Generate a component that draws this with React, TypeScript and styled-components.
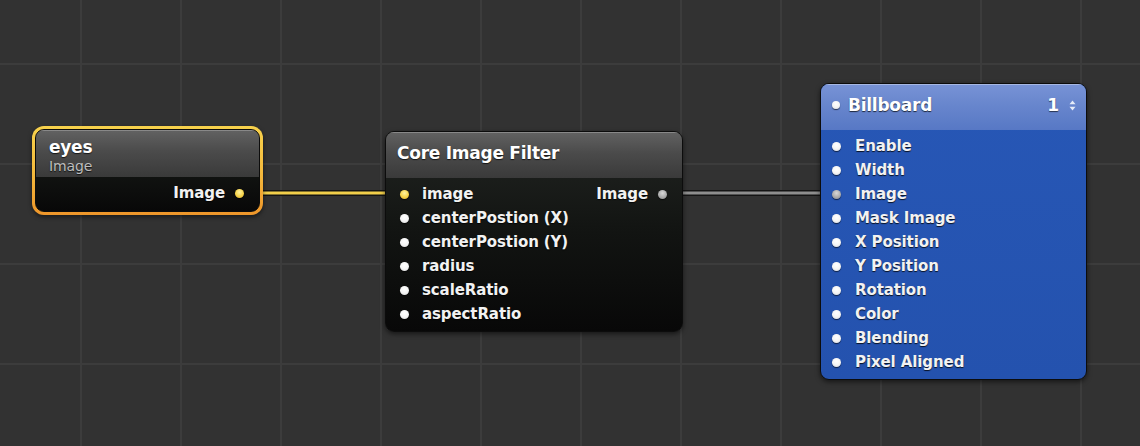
import React from "react";
import styled, { createGlobalStyle, css } from "styled-components";

const GlobalStyle = createGlobalStyle`
  html, body { margin: 0; padding: 0; background: #323232; }
  body { font-family: "DejaVu Sans", "Liberation Sans", sans-serif; }
`;

const Canvas = styled.div`
  position: relative;
  width: 1140px;
  height: 446px;
  overflow: hidden;
  background-color: #323232;
  background-image:
    linear-gradient(to right, #3c3c3c 0, #3c3c3c 2px, transparent 2px),
    linear-gradient(to bottom, #3c3c3c 0, #3c3c3c 2px, transparent 2px);
  background-size: 100px 100px;
  background-position: 80px 63px;
`;

const Wires = styled.svg`
  position: absolute;
  inset: 0;
  width: 1140px;
  height: 446px;
  z-index: 0;
`;

type Pos = { $x: number; $y: number; $w: number; $h: number };

const NodeFrame = styled.div<Pos & { $selected?: boolean }>`
  position: absolute;
  left: ${(p) => p.$x}px;
  top: ${(p) => p.$y}px;
  width: ${(p) => p.$w}px;
  height: ${(p) => p.$h}px;
  z-index: 1;
  box-sizing: border-box;
  border-radius: ${(p) => (p.$selected ? 12 : 9)}px;
  display: flex;
  ${(p) =>
    p.$selected
      ? css`
          padding: 3px;
          background: linear-gradient(to bottom, #f7d24c 0%, #f4b83c 55%, #ee962a 100%);
          box-shadow: 0 2px 4px rgba(0, 0, 0, 0.5);
        `
      : css`
          box-shadow: 0 2px 5px rgba(0, 0, 0, 0.55);
        `}
`;

const NodeBody = styled.div<{ $tone: "dark" | "blue" }>`
  flex: 1;
  display: flex;
  flex-direction: column;
  border-radius: 9px;
  overflow: hidden;
  border: 1px solid #0c0c0c;
  ${(p) =>
    p.$tone === "blue"
      ? css`
          background: linear-gradient(to bottom, #2757b6 0%, #2452ae 100%);
        `
      : css`
          background: linear-gradient(to bottom, #222522 0%, #121412 50%, #080808 100%);
        `}
`;

const Header = styled.div<{ $tone: "dark" | "blue"; $h: number; $pad?: number }>`
  height: ${(p) => p.$h}px;
  flex: none;
  display: flex;
  align-items: center;
  box-sizing: border-box;
  padding: 0 ${(p) => p.$pad ?? 12}px 4px 11px;
  gap: 8px;
  ${(p) =>
    p.$tone === "blue"
      ? css`
          background: linear-gradient(to bottom, #7893d6 0%, #6886cd 45%, #5778c5 100%);
          box-shadow: inset 0 1px 0 rgba(255, 255, 255, 0.35);
        `
      : css`
          background: linear-gradient(to bottom, #626262 0%, #4b4b4b 45%, #3a3a3a 100%);
          box-shadow: inset 0 1px 0 rgba(255, 255, 255, 0.25);
        `}
`;

const HeaderStack = styled.div`
  display: flex;
  flex-direction: column;
  justify-content: center;
  padding-left: 2px;
  padding-top: 9px;
`;

const Title = styled.div`
  font-family: "DejaVu Sans", sans-serif;
  font-weight: bold;
  font-size: 17px;
  line-height: 19px;
  color: #ffffff;
  letter-spacing: -0.25px;
  text-shadow: 0 1px 1px rgba(0, 0, 0, 0.7);
  flex: 1;
`;

const SubTitle = styled.div`
  font-family: "DejaVu Sans", sans-serif;
  font-size: 14px;
  line-height: 18px;
  color: #bdbdbd;
  letter-spacing: -0.1px;
  text-shadow: 0 1px 1px rgba(0, 0, 0, 0.7);
`;

const Ports = styled.div<{ $top: number }>`
  display: flex;
  flex-direction: column;
  padding-top: ${(p) => p.$top}px;
`;

const Row = styled.div<{ $left: number; $right: number }>`
  height: 24px;
  display: flex;
  align-items: center;
  padding: 0 ${(p) => p.$right}px 0 ${(p) => p.$left}px;
`;

const PortLabel = styled.span<{ $gap: number }>`
  font-family: "DejaVu Sans", sans-serif;
  font-weight: bold;
  font-size: 15px;
  letter-spacing: -0.1px;
  color: #f2f2f2;
  text-shadow: 0 1px 1px rgba(0, 0, 0, 0.8);
  margin-left: ${(p) => p.$gap}px;
  white-space: nowrap;
`;

const OutLabel = styled(PortLabel)`
  margin-left: auto;
  margin-right: 10px;
`;

type DotKind = "white" | "yellow" | "gray";

const Dot = styled.span<{ $kind: DotKind; $size?: number }>`
  flex: none;
  width: ${(p) => p.$size ?? 9}px;
  height: ${(p) => p.$size ?? 9}px;
  border-radius: 50%;
  box-shadow: 0 1px 1px rgba(0, 0, 0, 0.6);
  background: ${(p) =>
    p.$kind === "yellow"
      ? "radial-gradient(circle at 50% 35%, #fff3a0 0%, #f6d44a 55%, #d9a82a 100%)"
      : p.$kind === "gray"
      ? "radial-gradient(circle at 50% 35%, #d8d8d8 0%, #a8a8a8 60%, #808080 100%)"
      : "radial-gradient(circle at 50% 35%, #ffffff 0%, #f4f4f4 55%, #cfcfcf 100%)"};
`;

const Stepper = styled.div`
  display: flex;
  align-items: center;
  gap: 10px;
  font-family: "DejaVu Sans", sans-serif;
  font-weight: bold;
  font-size: 17px;
  color: #ffffff;
  text-shadow: 0 1px 1px rgba(0, 0, 0, 0.6);
`;

const Spacer = styled.div`
  flex: 1;
`;

const StepArrows = () => (
  <svg width="7" height="11" viewBox="0 0 7 11">
    <path d="M3.5 0.5 L6.5 4.3 L0.5 4.3 Z" fill="#e6ecf8" />
    <path d="M3.5 10.5 L6.5 6.7 L0.5 6.7 Z" fill="#e6ecf8" />
  </svg>
);

const ciInputs = [
  "image",
  "centerPostion (X)",
  "centerPostion (Y)",
  "radius",
  "scaleRatio",
  "aspectRatio",
];

const bbInputs = [
  "Enable",
  "Width",
  "Image",
  "Mask Image",
  "X Position",
  "Y Position",
  "Rotation",
  "Color",
  "Blending",
  "Pixel Aligned",
];

export default function App() {
  return (
    <>
      <GlobalStyle />
      <Canvas>
        <Wires viewBox="0 0 1140 446">
          <line x1="255" y1="193" x2="395" y2="193" stroke="#141414" strokeWidth="6" />
          <line x1="255" y1="193" x2="395" y2="193" stroke="#f2cf4a" strokeWidth="3" />
          <line x1="675" y1="193" x2="830" y2="193" stroke="#141414" strokeWidth="6" />
          <line x1="675" y1="193" x2="830" y2="193" stroke="#8e8e8e" strokeWidth="3" />
        </Wires>

        <NodeFrame $x={32} $y={126} $w={231} $h={89} $selected>
          <NodeBody $tone="dark">
            <Header $tone="dark" $h={47}>
              <HeaderStack>
                <Title>eyes</Title>
                <SubTitle>Image</SubTitle>
              </HeaderStack>
            </Header>
            <Ports $top={4}>
              <Row $left={16} $right={15}>
                <OutLabel $gap={0}>Image</OutLabel>
                <Dot $kind="yellow" />
              </Row>
            </Ports>
          </NodeBody>
        </NodeFrame>

        <NodeFrame $x={385} $y={131} $w={298} $h={201}>
          <NodeBody $tone="dark">
            <Header $tone="dark" $h={46}>
              <Title>Core Image Filter</Title>
            </Header>
            <Ports $top={4}>
              {ciInputs.map((name, i) => (
                <Row key={name} $left={14} $right={15}>
                  <Dot $kind={i === 0 ? "yellow" : "white"} />
                  <PortLabel $gap={13}>{name}</PortLabel>
                  {i === 0 && (
                    <>
                      <OutLabel $gap={0}>Image</OutLabel>
                      <Dot $kind="gray" />
                    </>
                  )}
                </Row>
              ))}
            </Ports>
          </NodeBody>
        </NodeFrame>

        <NodeFrame $x={820} $y={83} $w={267} $h={297}>
          <NodeBody $tone="blue">
            <Header $tone="blue" $h={46} $pad={10}>
              <Dot $kind="white" $size={8} />
              <Title>Billboard</Title>
              <Spacer />
              <Stepper>
                <span>1</span>
                <StepArrows />
              </Stepper>
            </Header>
            <Ports $top={4}>
              {bbInputs.map((name) => (
                <Row key={name} $left={11} $right={15}>
                  <Dot $kind={name === "Image" ? "gray" : "white"} />
                  <PortLabel $gap={14}>{name}</PortLabel>
                </Row>
              ))}
            </Ports>
          </NodeBody>
        </NodeFrame>
      </Canvas>
    </>
  );
}
